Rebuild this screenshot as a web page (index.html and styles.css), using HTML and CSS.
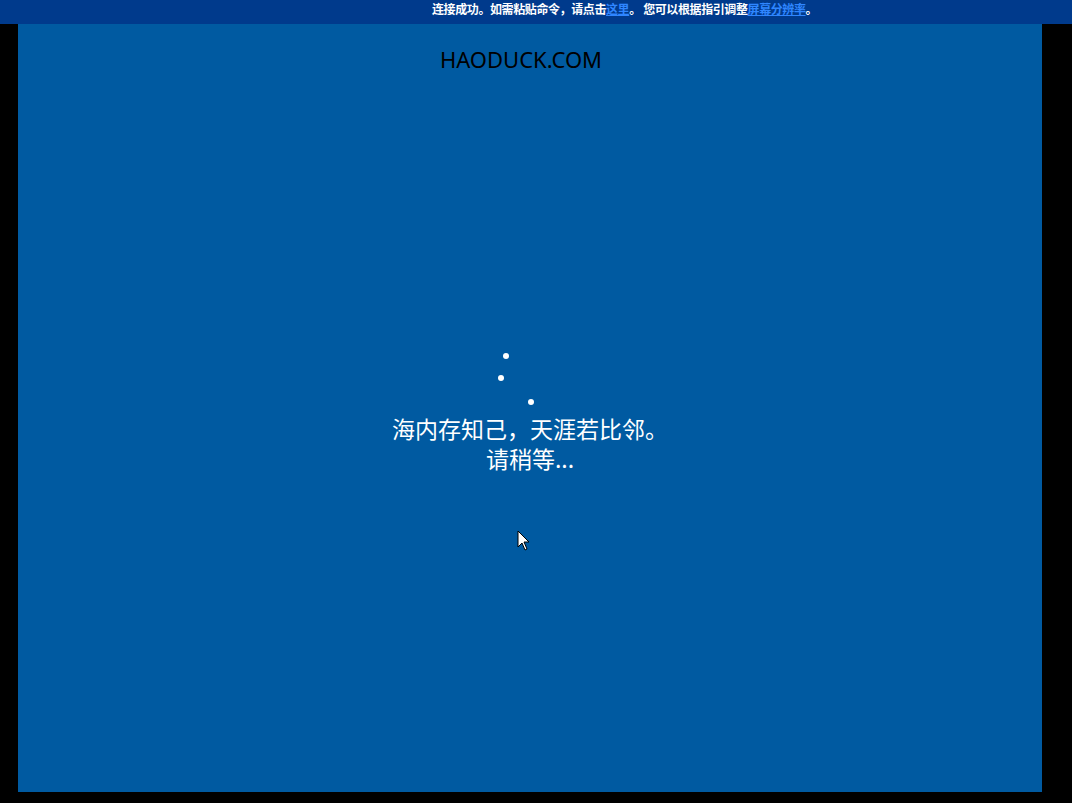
FILE: index.html
```html
<!DOCTYPE html>
<html lang="zh">
<head>
<meta charset="utf-8">
<title>HAODUCK</title>
<link rel="stylesheet" href="styles.css">
</head>
<body>
<div class="topbar">
  <span>连接成功。如需粘贴命令，请点击<a href="#">这里</a>。 您可以根据指引调整<a href="#">屏幕分辨率</a>。</span>
</div>
<main class="panel">
  <div class="brand">HAODUCK.COM</div>
  <div class="center">
    <div class="spinner">
      <i class="dot d1"></i>
      <i class="dot d2"></i>
      <i class="dot d3"></i>
    </div>
    <p class="msg">海内存知己，天涯若比邻。</p>
    <p class="msg">请稍等...</p>
  </div>
  <svg class="cursor" width="14" height="22" viewBox="0 0 14 22">
    <path d="M1 1 L1 17 L5 13 L8 20 L10 19 L7 12 L12 12 Z" fill="#fff" stroke="#000" stroke-width="1"/>
  </svg>
</main>
</body>
</html>
```
FILE: styles.css
```css
html, body {
  margin: 0;
  padding: 0;
  background: #000;
  height: 100%;
  overflow: hidden;
}
.topbar {
  height: 24px;
  background: #003a8c;
  color: #fff;
  font-family: "Noto Sans CJK SC", "Noto Sans", sans-serif;
  font-weight: 700;
  font-size: 12px;
  line-height: 18px;
  letter-spacing: -0.4px;
  padding-left: 432px;
  box-sizing: border-box;
  white-space: nowrap;
}
.topbar a {
  color: #2f86ff;
  text-decoration: underline;
}
.panel {
  position: relative;
  margin-left: 18px;
  width: 1024px;
  height: 768px;
  background: #005aa1;
  display: flex;
  flex-direction: column;
  align-items: center;
}
.brand {
  margin-top: 21px;
  margin-right: 18px;
  font-family: "Noto Sans", "Open Sans", sans-serif;
  font-size: 22px;
  line-height: 28px;
  color: #000;
}
.center {
  margin-top: 280px;
  display: flex;
  flex-direction: column;
  align-items: center;
}
.spinner {
  position: relative;
  width: 40px;
  height: 60px;
}
.dot {
  position: absolute;
  width: 6px;
  height: 6px;
  border-radius: 50%;
  background: #fff;
}
.d1 { left: -7px; top: 0; }
.d2 { left: -12px; top: 22px; }
.d3 { left: 18px; top: 46px; }
.msg {
  margin: 0;
  font-family: "Noto Sans CJK SC", sans-serif;
  font-size: 23px;
  line-height: 30px;
  height: 30px;
  color: #fff;
  text-align: center;
}
.cursor {
  position: absolute;
  left: 499px;
  top: 506px;
}
```
